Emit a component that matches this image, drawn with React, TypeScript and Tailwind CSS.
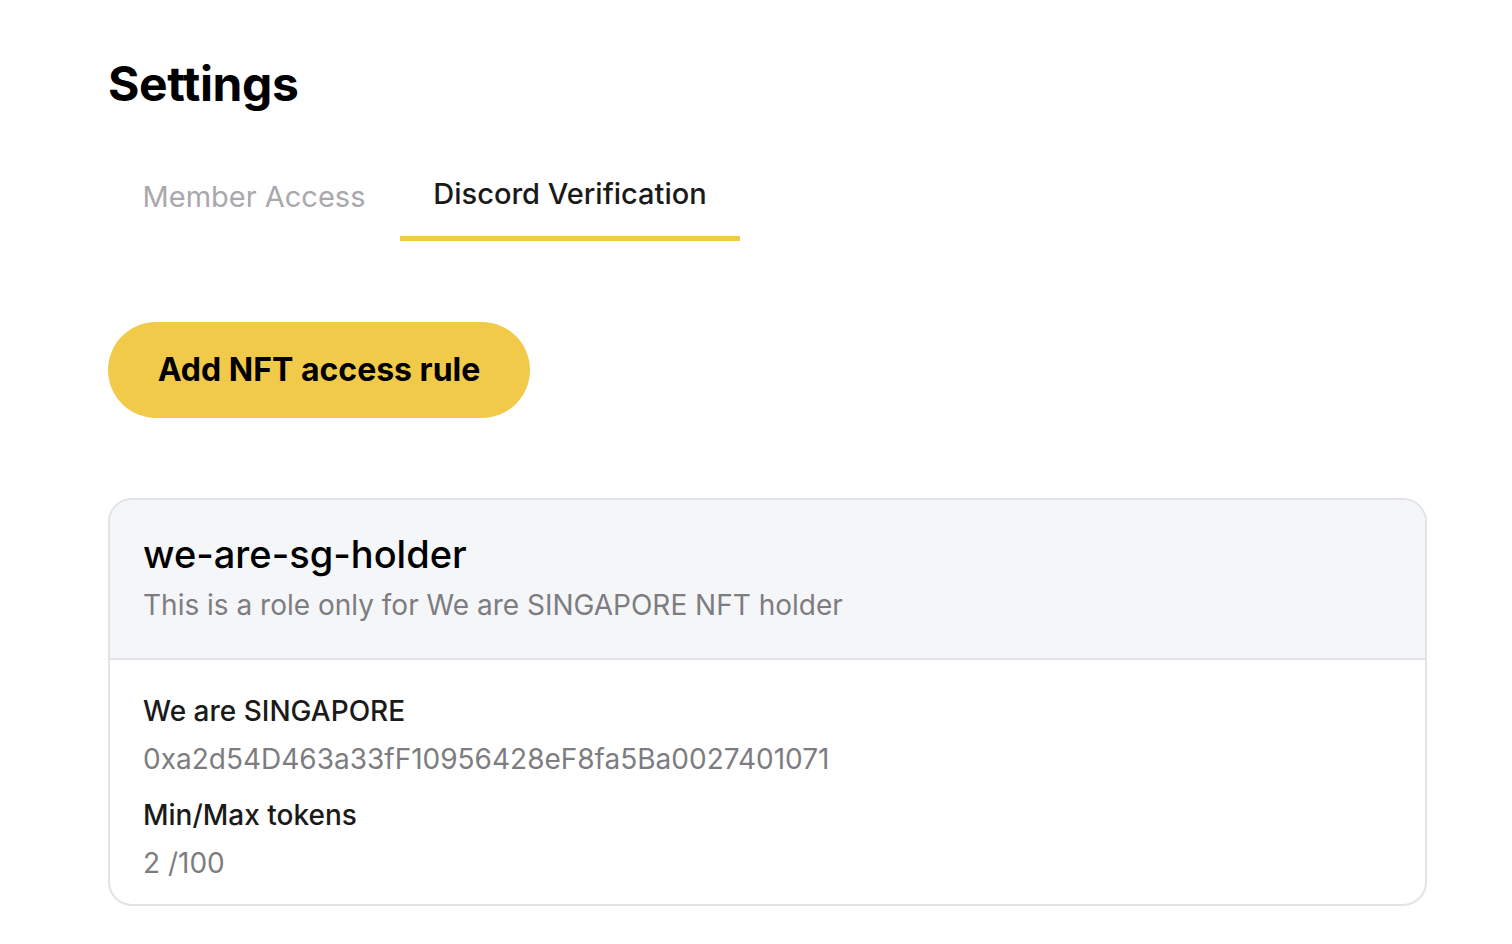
export default function App() {
  return (
    <div className="min-h-screen bg-white font-['Inter',sans-serif] text-black">
      <div className="pl-[108px] pr-[85px] pt-[54px]">
        <h1 className="text-[48px] font-bold leading-[60px] tracking-[-0.4px]">Settings</h1>

        {/* tabs */}
        <div className="mt-[63px] flex items-end">
          <button className="w-[292px] pb-[27px] text-[29px] leading-[34px] text-[#a8a8ad]">
            Member Access
          </button>
          <button className="w-[340px] border-b-[5px] border-[#f2ca4a] pb-[25px] text-[29px] font-medium leading-[34px] text-[#1a1a1a]">
            Discord Verification
          </button>
        </div>

        <button className="mt-[81px] h-[96px] w-[422px] rounded-full bg-[#f2ca4a] text-[32px] font-bold text-black">
          Add NFT access rule
        </button>

        {/* rule card */}
        <div className="mt-[80px] overflow-hidden rounded-[24px] border-2 border-[#e2e3e7]">
          <div className="border-b-2 border-[#e2e3e7] bg-[#f5f6f8] px-[33px] pb-[35px] pt-[31px]">
            <div className="text-[38px] font-medium leading-[46px]">we-are-sg-holder</div>
            <div className="mt-[10px] text-[28px] leading-[36px] text-[#7d7d81]">
              This is a role only for We are SINGAPORE NFT holder
            </div>
          </div>
          <div className="flex flex-col px-[33px] pb-[23px] pt-[33px]">
            <div className="text-[28px] font-medium leading-[36px] text-[#1a1a1a]">We are SINGAPORE</div>
            <div className="mt-[12px] text-[28px] leading-[36px] text-[#7d7d81]">
              0xa2d54D463a33fF10956428eF8fa5Ba0027401071
            </div>
            <div className="mt-[20px] text-[28px] font-medium leading-[36px] text-[#1a1a1a]">Min/Max tokens</div>
            <div className="mt-[12px] text-[28px] leading-[36px] text-[#7d7d81]">2 /100</div>
          </div>
        </div>
      </div>
    </div>
  );
}
